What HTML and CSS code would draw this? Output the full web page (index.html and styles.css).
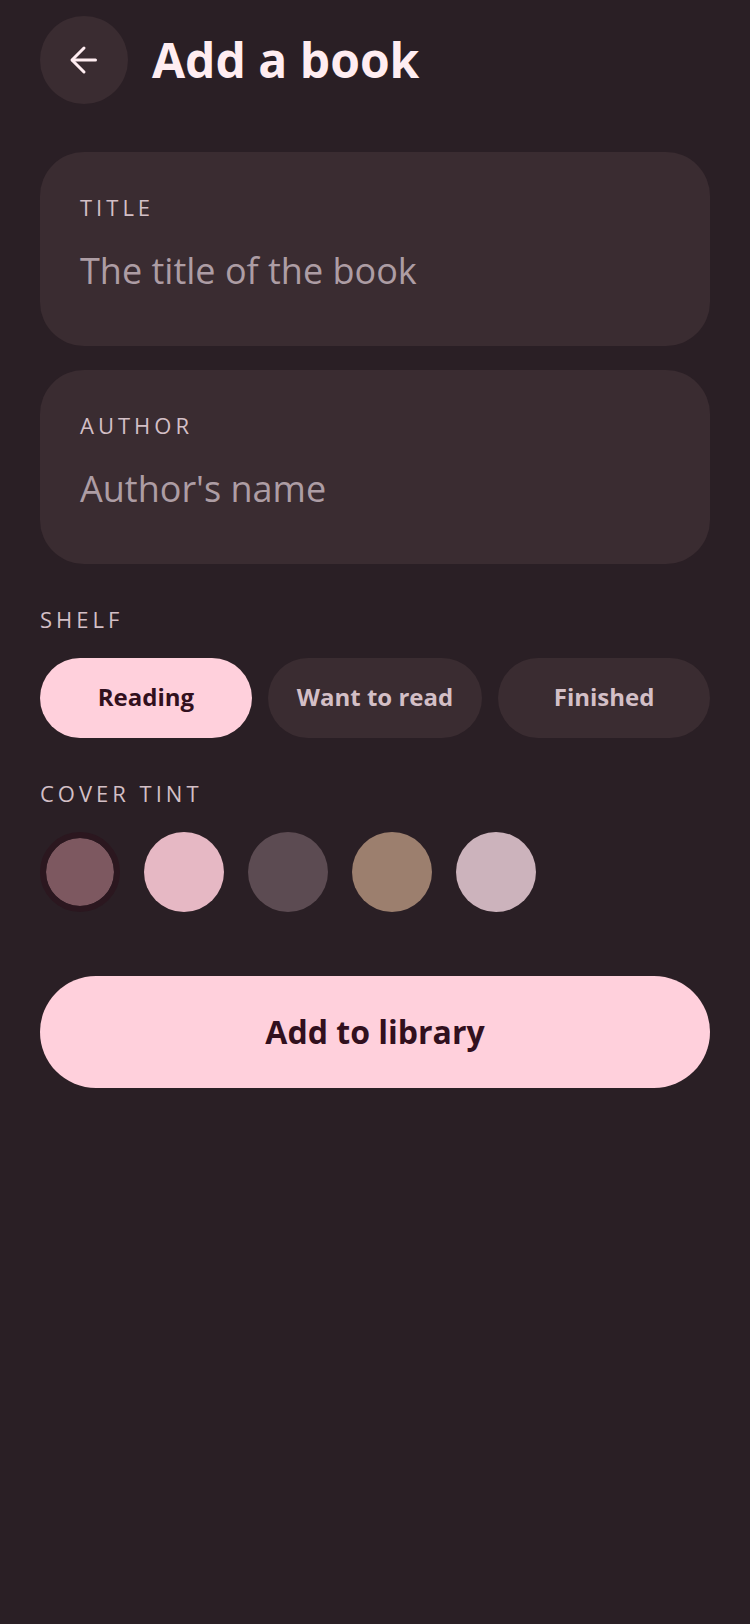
FILE: index.html
```html
<!DOCTYPE html>
<html lang="en">
<head>
  <meta charset="UTF-8" />
  <meta name="viewport" content="width=device-width, initial-scale=1.0"/>
  <title>Add a book</title>
  <link rel="stylesheet" href="styles.css">
</head>
<body>
  <header class="top-bar">
    <button class="back-btn" aria-label="Back">
      <svg width="32" height="32" viewBox="0 0 32 32" fill="none" stroke="#ffedf1" stroke-width="3" stroke-linecap="round" stroke-linejoin="round">
        <path d="M27.500 16H4.500"/>
        <path d="M16 4L4 16l12 12"/>
      </svg>
    </button>
    <h1>Add a book</h1>
  </header>

  <main class="form">
    <div class="field">
      <label class="field-label">Title</label>
      <div class="field-input">The title of the book</div>
    </div>
    <div class="field">
      <label class="field-label">Author</label>
      <div class="field-input">Author's name</div>
    </div>

    <div class="section-label shelf-label">Shelf</div>
    <div class="chips">
      <button class="chip active">Reading</button>
      <button class="chip">Want to read</button>
      <button class="chip">Finished</button>
    </div>

    <div class="section-label tint-label">Cover tint</div>
    <div class="swatches">
      <span class="swatch selected tint-1"></span>
      <span class="swatch tint-2"></span>
      <span class="swatch tint-3"></span>
      <span class="swatch tint-4"></span>
      <span class="swatch tint-5"></span>
    </div>

    <button class="submit">Add to library</button>
  </main>
</body>
</html>
```

FILE: styles.css
```css
body {
  margin: 0;
  min-height: 1624px;
  background: #2a1f25;
  font-family: "Open Sans", sans-serif;
  color: #ffedf1;
}

button {
  border: none;
  padding: 0;
  font-family: inherit;
}

.top-bar {
  display: flex;
  align-items: center;
  gap: 24px;
  padding: 16px 40px 0;
}

.top-bar h1 {
  margin: 0;
  font-size: 48px;
  line-height: 88px;
  font-weight: 700;
}

.back-btn {
  display: flex;
  align-items: center;
  justify-content: center;
  width: 88px;
  height: 88px;
  border-radius: 50%;
  background: #3a2c31;
}

.form {
  display: flex;
  flex-direction: column;
  padding: 48px 40px 0;
}

.field {
  height: 194px;
  box-sizing: border-box;
  padding: 41px 40px 0;
  margin-bottom: 24px;
  border-radius: 44px;
  background: #3a2c31;
}

.field-label,
.section-label {
  display: block;
  font-size: 22px;
  line-height: 28px;
  letter-spacing: 4px;
  text-transform: uppercase;
  color: #d3bfc6;
}

.field-input {
  margin-top: 25px;
  font-size: 36px;
  line-height: 50px;
  color: #ad9da4;
}

.shelf-label {
  margin-top: 17px;
}

.chips {
  display: flex;
  gap: 16px;
  margin-top: 25px;
}

.chip {
  flex: 1 1 0;
  height: 80px;
  padding: 0 29px 3px;
  border-radius: 40px;
  background: #3a2c31;
  color: #d3bfc6;
  font-size: 24px;
  font-weight: 700;
  white-space: nowrap;
}

.chip.active {
  background: #ffd0dc;
  color: #32101e;
}

.tint-label {
  margin-top: 41px;
}

.swatches {
  display: flex;
  gap: 24px;
  margin-top: 25px;
}

.swatch {
  width: 80px;
  height: 80px;
  border-radius: 50%;
}

.swatch.selected {
  box-sizing: border-box;
  border: 6px solid #2b171f;
  background-clip: padding-box;
}

.tint-1 { background-color: #7d5860; }
.tint-2 { background-color: #e6b8c4; }
.tint-3 { background-color: #5c4b52; }
.tint-4 { background-color: #9c7f6e; }
.tint-5 { background-color: #ccb3bc; }

.submit {
  height: 112px;
  margin-top: 64px;
  padding-bottom: 2px;
  border-radius: 56px;
  background: #ffd0dc;
  color: #32101e;
  font-size: 32px;
  font-weight: 700;
}
```
